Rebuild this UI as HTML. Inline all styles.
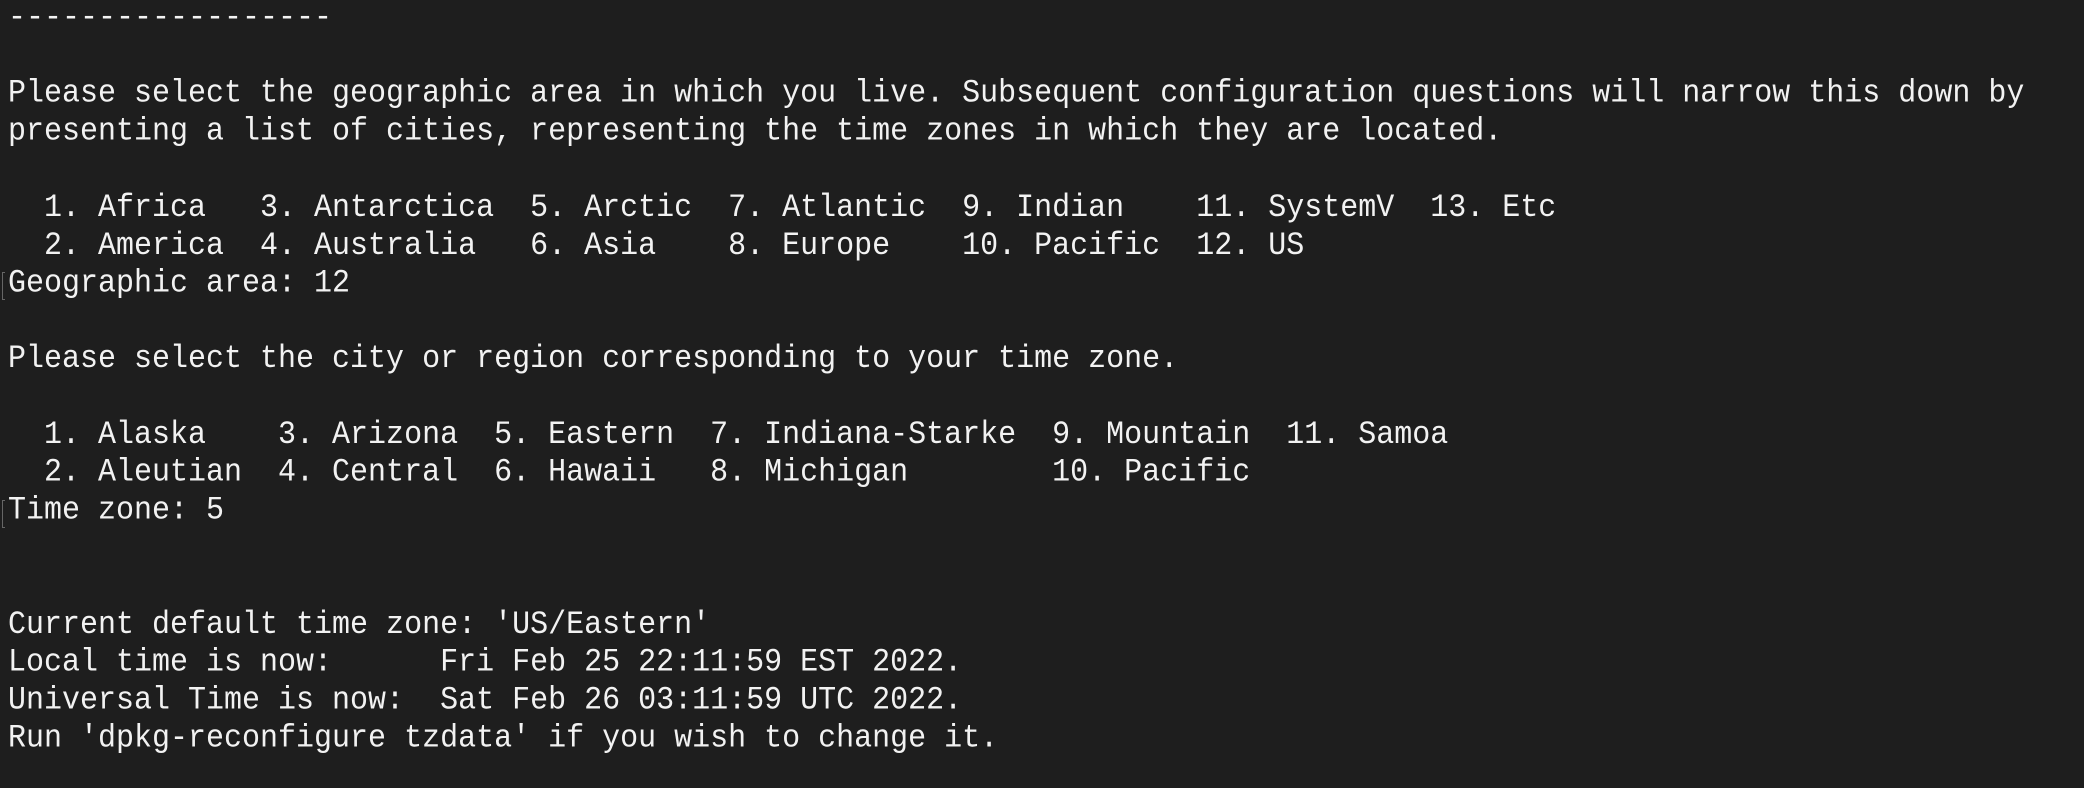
<!DOCTYPE html>
<html><head><meta charset="utf-8"><style>
html,body{margin:0;padding:0;background:#1e1e1e;width:2084px;height:788px;overflow:hidden}
pre{margin:0;position:absolute;left:8px;top:0px;font-family:"Liberation Mono",monospace;font-size:30px;line-height:35.11px;color:#f2f2f2;transform:scaleY(1.08);transform-origin:0 0}
.cur{position:absolute;left:2px;height:26px;border:1px solid #666;border-right:none;width:2px}
</style></head><body>
<pre>------------------

Please select the geographic area in which you live. Subsequent configuration questions will narrow this down by
presenting a list of cities, representing the time zones in which they are located.

  1. Africa   3. Antarctica  5. Arctic  7. Atlantic  9. Indian    11. SystemV  13. Etc
  2. America  4. Australia   6. Asia    8. Europe    10. Pacific  12. US
Geographic area: 12

Please select the city or region corresponding to your time zone.

  1. Alaska    3. Arizona  5. Eastern  7. Indiana-Starke  9. Mountain  11. Samoa
  2. Aleutian  4. Central  6. Hawaii   8. Michigan        10. Pacific
Time zone: 5


Current default time zone: 'US/Eastern'
Local time is now:      Fri Feb 25 22:11:59 EST 2022.
Universal Time is now:  Sat Feb 26 03:11:59 UTC 2022.
Run 'dpkg-reconfigure tzdata' if you wish to change it.</pre>
<div class="cur" style="top:272px"></div>
<div class="cur" style="top:500px"></div>
</body></html>
